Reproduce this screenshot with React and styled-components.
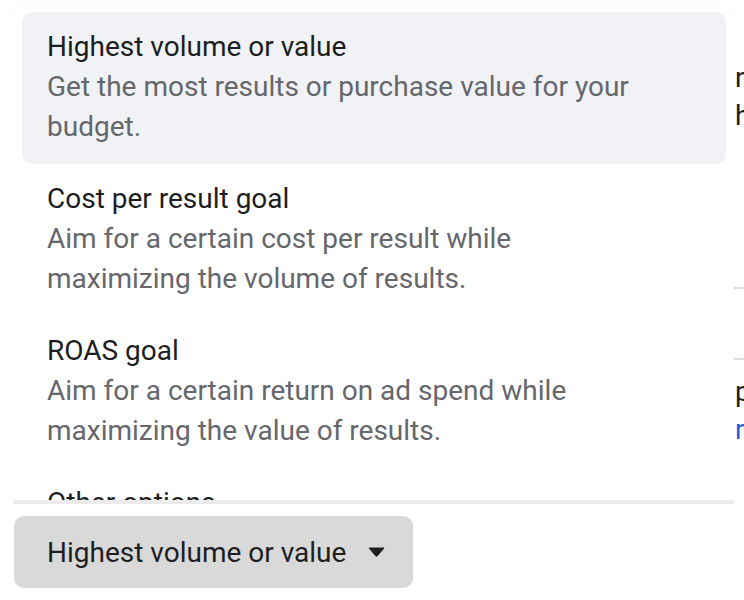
import React from "react";
import styled, { createGlobalStyle } from "styled-components";

const Global = createGlobalStyle`
  html, body { margin: 0; padding: 0; background: #ffffff; }
  body { font-family: Roboto, "Noto Sans", Arial, sans-serif; -webkit-font-smoothing: antialiased; }
`;

const Page = styled.div`
  width: 744px;
  height: 600px;
  overflow: hidden;
  display: flex;
  align-items: flex-start;
  padding-left: 14px;
  box-sizing: border-box;
`;

const Column = styled.div`
  width: 720px;
  flex: none;
  display: flex;
  flex-direction: column;
  align-items: flex-start;
  padding-top: 4px;
`;

const Popover = styled.div`
  width: 720px;
  background: #ffffff;
  border-radius: 10px 10px 0 0;
  box-shadow: 0 0 2px rgba(0, 0, 0, 0.07);
  box-sizing: border-box;
`;

const List = styled.div`
  height: 500px;
  overflow: hidden;
  padding: 8px 8px 0;
  box-sizing: border-box;
  border-bottom: 4px solid #ebebeb;
`;

const Option = styled.div`
  padding: 15px 25px 17px;
  border-radius: 10px;
  background: ${(p) => (p.$active ? "#f0f2f5" : "transparent")};
`;

const Title = styled.div`
  font-size: 28px;
  line-height: 40px;
  color: #1c1e21;
`;

const Desc = styled.div`
  font-size: 28px;
  line-height: 40px;
  color: #65676b;
  max-width: 600px;
`;

const Select = styled.button`
  margin-top: 12px;
  width: 399px;
  height: 72px;
  border: none;
  border-radius: 10px;
  background: #d9d9d9;
  display: flex;
  align-items: center;
  gap: 22px;
  padding: 0 0 0 33px;
  font-family: inherit;
  font-size: 28px;
  color: #1c1e21;
  cursor: pointer;
`;

const Peek = styled.div`
  width: 10px;
  flex: none;
  overflow: hidden;
  display: flex;
  flex-direction: column;
  padding-top: 59px;
  font-size: 28px;
  line-height: 38px;
  color: #1c1e21;
`;

const PeekLine = styled.div`
  white-space: nowrap;
  padding-left: 1px;
  color: ${(p) => (p.$link ? "#2a5bd7" : "#1c1e21")};
`;

const PeekRule = styled.div`
  height: 2px;
  background: #dadde1;
  margin-top: ${(p) => p.$gap}px;
`;

const PeekGap = styled.div`
  height: ${(p) => p.$h}px;
`;

const options = [
  {
    title: "Highest volume or value",
    desc: "Get the most results or purchase value for your budget.",
  },
  {
    title: "Cost per result goal",
    desc: "Aim for a certain cost per result while maximizing the volume of results.",
  },
  {
    title: "ROAS goal",
    desc: "Aim for a certain return on ad spend while maximizing the value of results.",
  },
  { title: "Other options", desc: "" },
];

export default function App() {
  return (
    <>
      <Global />
      <Page>
        <Column>
          <Popover>
            <List>
              {options.map((o, i) => (
                <Option key={o.title} $active={i === 0}>
                  <Title>{o.title}</Title>
                  {o.desc && <Desc>{o.desc}</Desc>}
                </Option>
              ))}
            </List>
          </Popover>
          <Select>
            <span>Highest volume or value</span>
            <svg width="17" height="10" viewBox="0 0 17 10">
              <path d="M1 1 H16 L9.6 8.6 Q8.5 9.8 7.4 8.6 Z" fill="#1c1e21" stroke="#1c1e21" strokeWidth="1" strokeLinejoin="round" />
            </svg>
          </Select>
        </Column>
        <Peek>
          <PeekLine>nh</PeekLine>
          <PeekLine>he</PeekLine>
          <PeekRule $gap={152} />
          <PeekRule $gap={69} />
          <PeekGap $h={13} />
          <PeekLine>pe</PeekLine>
          <PeekLine $link>mo</PeekLine>
        </Peek>
      </Page>
    </>
  );
}
